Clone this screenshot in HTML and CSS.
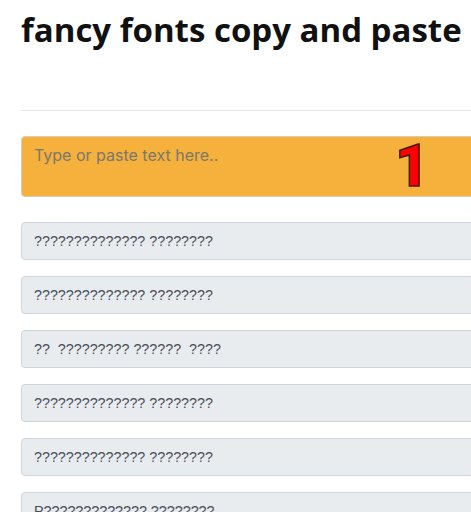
FILE: index.html
```html
<!DOCTYPE html>
<html lang="en">
<head>
<meta charset="utf-8">
<title>fancy fonts copy and paste</title>
<link rel="stylesheet" href="styles.css">
</head>
<body>
<div class="page">
  <h1 class="title">fancy fonts copy and paste</h1>
  <hr class="divider">
  <div class="input-wrap">
    <textarea class="source" rows="2" placeholder="Type or paste text here.."></textarea>
    <span class="step">1</span>
  </div>
  <div class="results">
    <input class="result" type="text" readonly value="?????????????? ????????">
    <input class="result" type="text" readonly value="?????????????? ????????">
    <input class="result" type="text" readonly value="??  ????????? ??????  ????">
    <input class="result" type="text" readonly value="?????????????? ????????">
    <input class="result" type="text" readonly value="?????????????? ????????">
    <input class="result" type="text" readonly value="P????????????? ????????">
  </div>
</div>
</body>
</html>
```

FILE: styles.css
```css
html, body {
  margin: 0;
  padding: 0;
  background: #fff;
  overflow: hidden;
}

.page {
  width: 600px;
  padding: 0 21px;
  font-family: "Liberation Sans", Arial, sans-serif;
}

.title {
  margin: 0;
  padding-top: 10px;
  font-family: "Open Sans", "Noto Sans", sans-serif;
  font-weight: 700;
  font-size: 33px;
  line-height: 40px;
  color: #111;
  letter-spacing: 0;
}

.divider {
  margin: 60px 0 0;
  border: 0;
  border-top: 1px solid #e6e6e6;
}

.input-wrap {
  position: relative;
  margin-top: 25px;
}

.source {
  display: block;
  box-sizing: border-box;
  width: 100%;
  height: 61px;
  padding: 6px 12px;
  font-family: Inter, "Open Sans", sans-serif;
  font-size: 16px;
  line-height: 24px;
  color: #495057;
  background: #f5b13b;
  border: 1px solid #d9cdb5;
  border-radius: 4px;
  resize: none;
  outline: none;
}

.source::placeholder {
  color: #7a776f;
}

.step {
  position: absolute;
  left: 374px;
  top: -2px;
  font-family: Roboto, "Liberation Sans", sans-serif;
  font-weight: 900;
  font-size: 59px;
  line-height: 64px;
  color: #ff0000;
  -webkit-text-stroke: 1.5px #3a1a00;
}

.results {
  display: flex;
  flex-direction: column;
  gap: 16px;
  margin-top: 25px;
}

.result {
  display: block;
  box-sizing: border-box;
  width: 100%;
  height: 38px;
  padding: 6px 12px;
  font-family: "Liberation Sans", Arial, sans-serif;
  font-size: 14.3px;
  color: #495057;
  background: #e9ecef;
  border: 1px solid #ced4da;
  border-radius: 4px;
  outline: none;
}
```
